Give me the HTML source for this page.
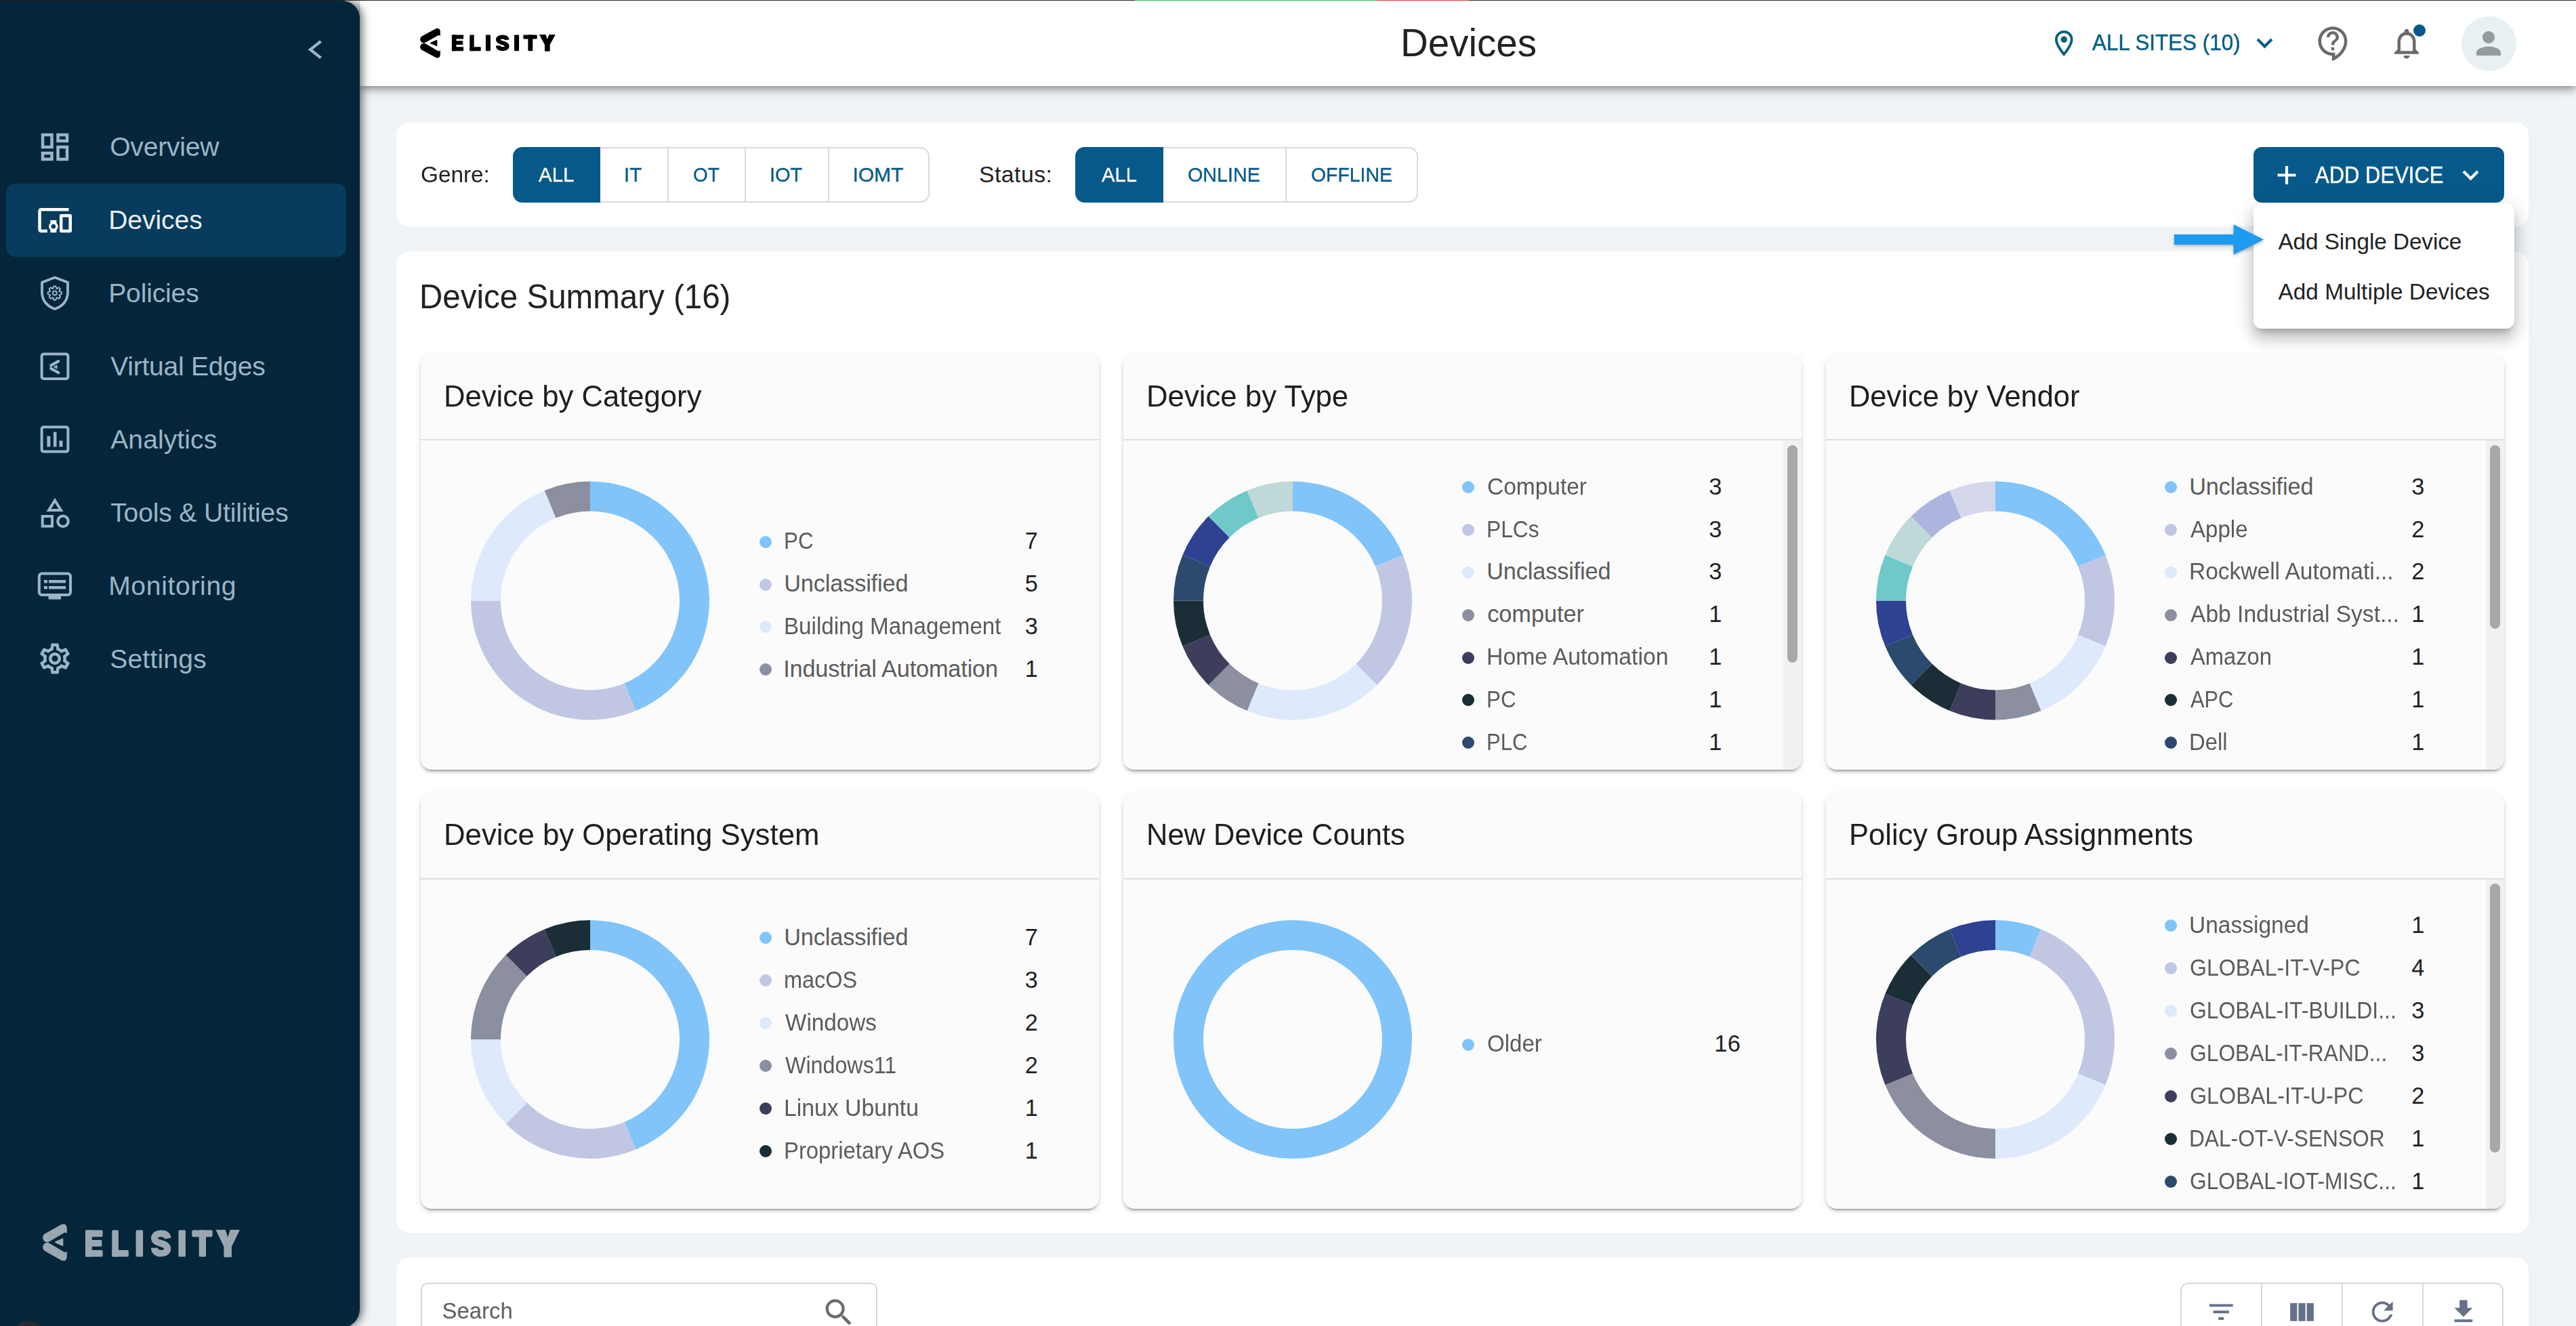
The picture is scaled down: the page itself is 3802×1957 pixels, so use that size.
<!DOCTYPE html><html><head><meta charset="utf-8"><style>
html,body{margin:0;padding:0;}
body{width:3802px;height:1957px;overflow:hidden;position:relative;background:#f0f4f7;font-family:"Liberation Sans", sans-serif;}
.t{position:absolute;white-space:nowrap;line-height:1;font-family:"Liberation Sans", sans-serif;}
svg{overflow:visible}
</style></head><body>
<div style="position:absolute;left:585px;top:181px;width:3147px;height:153px;background:#fff;border-radius:18px;"></div>
<div style="position:absolute;left:585px;top:371px;width:3147px;height:1449px;background:#fff;border-radius:20px;"></div>
<div style="position:absolute;left:585px;top:1856px;width:3147px;height:200px;background:#fff;border-radius:20px;"></div>
<div style="position:absolute;left:531px;top:1px;width:3271px;height:126px;background:#fff;box-shadow:0 4px 8px -2px rgba(0,0,0,.25),0 8px 10px 0 rgba(0,0,0,.15),0 2px 20px 0 rgba(0,0,0,.13);"></div>
<div style="position:absolute;left:0px;top:0px;width:3802px;height:1px;background:#2b2b2b;"></div>
<div style="position:absolute;left:1675px;top:0px;width:357px;height:1px;background:#2bc45a;"></div>
<div style="position:absolute;left:2032px;top:0px;width:136px;height:1px;background:#e0393e;"></div>
<div style="position:absolute;left:0px;top:1px;width:531px;height:1958.5px;background:#05263a;border-radius:0 26px 28px 0;box-shadow:4px 0 8px -2px rgba(0,0,0,.3),6px 0 12px 0 rgba(0,0,0,.22),2px 0 20px 0 rgba(0,0,0,.15);"></div>
<div style="position:absolute;left:18.6px;top:1949px;width:46.8px;height:46.8px;background:#27292d;border-radius:50%;"></div>
<svg style="position:absolute;left:0px;top:0px;" width="1" height="1"><polyline points="473.5,61 458,73.2 473.5,85.4" fill="none" stroke="#9bb5c7" stroke-width="4.2" stroke-linecap="butt" stroke-linejoin="miter"/></svg>
<div style="position:absolute;left:9px;top:271px;width:502px;height:107.5px;background:#083c5c;border-radius:14px;"></div>
<div class="t" style="left:162.20px;top:197.46px;font-size:39.03px;color:#9bb5c7;letter-spacing:-0.203px;font-weight:400;">Overview</div>
<div class="t" style="left:160.20px;top:305.46px;font-size:39.03px;color:#e8eff3;letter-spacing:-0.043px;font-weight:400;">Devices</div>
<div class="t" style="left:160.20px;top:413.46px;font-size:39.03px;color:#9bb5c7;letter-spacing:-0.133px;font-weight:400;">Policies</div>
<div class="t" style="left:163.20px;top:521.46px;font-size:39.03px;color:#9bb5c7;letter-spacing:-0.237px;font-weight:400;">Virtual Edges</div>
<div class="t" style="left:163.20px;top:629.46px;font-size:39.03px;color:#9bb5c7;letter-spacing:0.111px;font-weight:400;">Analytics</div>
<div class="t" style="left:163.20px;top:737.46px;font-size:39.03px;color:#9bb5c7;letter-spacing:-0.126px;font-weight:400;">Tools &amp; Utilities</div>
<div class="t" style="left:160.20px;top:845.46px;font-size:39.03px;color:#9bb5c7;letter-spacing:0.682px;font-weight:400;">Monitoring</div>
<div class="t" style="left:162.20px;top:953.46px;font-size:39.03px;color:#9bb5c7;letter-spacing:0.219px;font-weight:400;">Settings</div>
<svg style="position:absolute;left:54.25px;top:190.25px;" width="54.00" height="54.00" viewBox="0 0 24 24"><path d="M19 5v2h-4V5h4M9 5v6H5V5h4m10 8v6h-4v-6h4M9 17v2H5v-2h4M21 3h-8v6h8V3zM11 3H3v10h8V3zm10 8h-8v10h8V11zm-10 4H3v6h8v-6z" fill="#9bb5c7"/></svg>
<svg style="position:absolute;left:53.70px;top:298.00px;" width="54.24" height="54.24" viewBox="0 0 24 24"><path d="M3 6h18V4H3c-1.1 0-2 .9-2 2v12c0 1.1.9 2 2 2h4v-2H3V6zm10 6H9v1.78c-.61.55-1 1.33-1 2.22s.39 1.67 1 2.22V20h4v-1.78c.61-.55 1-1.34 1-2.22s-.39-1.67-1-2.22V12zm-2 5.5c-.83 0-1.5-.67-1.5-1.5s.67-1.5 1.5-1.5 1.5.67 1.5 1.5-.67 1.5-1.5 1.5zM22 8h-6c-.5 0-1 .5-1 1v10c0 .5.5 1 1 1h6c.5 0 1-.5 1-1V9c0-.5-.5-1-1-1zm-1 10h-4v-8h4v8z" fill="#ffffff"/></svg>
<svg style="position:absolute;left:0px;top:0px;" width="1" height="1"><path d="M81 409.5 L100 416.8 V431 C100 444 92 452.5 81 456 C70 452.5 62 444 62 431 V416.8 Z" fill="none" stroke="#9bb5c7" stroke-width="3.8" stroke-linejoin="round"/><path d="M78.18 425.90 L79.28 422.51 L82.32 422.51 L83.42 425.90 L83.69 426.00 L86.85 424.39 L89.01 426.55 L87.40 429.71 L87.50 429.98 L90.89 431.08 L90.89 434.12 L87.50 435.22 L87.40 435.49 L89.01 438.65 L86.85 440.81 L83.69 439.20 L83.42 439.30 L82.32 442.69 L79.28 442.69 L78.18 439.30 L77.91 439.20 L74.75 440.81 L72.59 438.65 L74.20 435.49 L74.10 435.22 L70.71 434.12 L70.71 431.08 L74.10 429.98 L74.20 429.71 L72.59 426.55 L74.75 424.39 L77.91 426.00Z" fill="none" stroke="#9bb5c7" stroke-width="2.0" stroke-linejoin="round"/><circle cx="80.8" cy="432.6" r="3.0" fill="none" stroke="#9bb5c7" stroke-width="2.0"/></svg>
<svg style="position:absolute;left:0px;top:0px;" width="1" height="1"><rect x="61.6" y="522.6" width="38.8" height="36.4" rx="3" fill="none" stroke="#9bb5c7" stroke-width="4"/><path d="M86.2 533.2 L75.2 539.4" stroke="#9bb5c7" stroke-width="4.3" stroke-linecap="round"/><path d="M75.2 543.8 L86.2 550" stroke="#9bb5c7" stroke-width="4.3" stroke-linecap="round"/><path d="M79.2 541.6 L84.2 539 L84.2 544.2 Z" fill="#9bb5c7" stroke="#9bb5c7" stroke-width="0.8" stroke-linejoin="round"/></svg>
<svg style="position:absolute;left:0px;top:0px;" width="1" height="1"><rect x="61.6" y="630.2" width="38.8" height="36.4" rx="3" fill="none" stroke="#9bb5c7" stroke-width="4"/><rect x="69.4" y="643.6" width="4.9" height="15.8" fill="#9bb5c7"/><rect x="78.9" y="637.5" width="4.6" height="21.9" fill="#9bb5c7"/><rect x="87.5" y="650.3" width="4.9" height="9.1" fill="#9bb5c7"/></svg>
<svg style="position:absolute;left:0px;top:0px;" width="1" height="1"><path d="M81 738.5 L90 753 L72 753 Z" fill="none" stroke="#9bb5c7" stroke-width="4" stroke-linejoin="miter"/><rect x="62.7" y="762" width="14.3" height="14.6" fill="none" stroke="#9bb5c7" stroke-width="4"/><circle cx="93" cy="769.3" r="7.8" fill="none" stroke="#9bb5c7" stroke-width="4"/></svg>
<svg style="position:absolute;left:0px;top:0px;" width="1" height="1"><rect x="57.8" y="846.5" width="46.2" height="31.5" rx="4" fill="none" stroke="#9bb5c7" stroke-width="4"/><rect x="71.6" y="879" width="18.4" height="5.6" fill="#9bb5c7"/><rect x="64.9" y="856" width="5" height="4.4" fill="#9bb5c7"/><rect x="72" y="856" width="25" height="4.4" fill="#9bb5c7"/><rect x="64.9" y="865" width="5" height="4.4" fill="#9bb5c7"/><rect x="72" y="865" width="25" height="4.4" fill="#9bb5c7"/></svg>
<svg style="position:absolute;left:53.65px;top:945.00px;" width="54.00" height="54.00" viewBox="0 0 24 24"><path d="M19.43 12.98c.04-.32.07-.64.07-.98 0-.34-.03-.66-.07-.98l2.11-1.65c.19-.15.24-.42.12-.64l-2-3.46c-.09-.16-.26-.25-.44-.25-.06 0-.12.01-.17.03l-2.49 1c-.52-.4-1.08-.73-1.69-.98l-.38-2.65C14.46 2.18 14.25 2 14 2h-4c-.25 0-.46.18-.49.42l-.38 2.650c-.61.25-1.17.59-1.69.98l-2.49-1c-.06-.02-.12-.03-.18-.03-.17 0-.34.09-.43.25l-2 3.46c-.13.22-.07.49.12.64l2.11 1.65c-.04.32-.07.65-.07.98 0 .33.03.66.07.98l-2.11 1.65c-.19.15-.24.42-.12.64l2 3.46c.09.16.26.25.44.25.06 0 .12-.01.17-.03l2.49-1c.52.4 1.08.73 1.69.98l.38 2.65c.03.24.24.42.49.42h4c.25 0 .46-.18.49-.42l.38-2.65c.61-.25 1.17-.59 1.69-.98l2.49 1c.06.02.12.03.18.03.17 0 .34-.09.43-.25l2-3.46c.12-.22.07-.49-.12-.64l-2.110-1.65zm-1.98-1.71c.04.31.05.52.05.73 0 .21-.02.43-.05.73l-.14 1.13.89.7 1.08.84-.7 1.21-1.27-.51-1.04-.42-.9.68c-.43.32-.84.56-1.25.73l-1.06.43-.16 1.13-.2 1.35h-1.4l-.19-1.35-.16-1.13-1.06-.43c-.43-.18-.83-.41-1.23-.71l-.91-.7-1.06.43-1.27.51-.7-1.21 1.08-.84.89-.7-.14-1.13c-.03-.31-.05-.54-.05-.74s.02-.43.05-.73l.14-1.13-.89-.7-1.08-.84.7-1.21 1.27.51 1.04.42.9-.68c.43-.32.84-.56 1.25-.73l1.06-.43.16-1.13.2-1.35h1.39l.19 1.35.16 1.13 1.06.43c.43.18.83.41 1.23.71l.91.7 1.06-.43 1.27-.51.7 1.21-1.07.85-.89.7.14 1.130zM12 8c-2.21 0-4 1.79-4 4s1.79 4 4 4 4-1.79 4-4-1.79-4-4-4zm0 6c-1.1 0-2-.9-2-2s.9-2 2-2 2 .9 2 2-.9 2-2 2z" fill="#9bb5c7"/></svg>
<svg style="position:absolute;left:0px;top:0px;" width="1" height="1"><g transform="translate(63,1806) scale(1.2,1.245)"><path d="M29.8 11.2 L27 10.4 L8.5 21 A5.3 5.3 0 0 1 2.5 12 L22.5 1.2 Q25.5 -0.4 28 1 Q29.8 2.4 29.8 5 Z" fill="#9aa7b1"/><path d="M29.8 33.1 L27 33.9 L8.5 23.3 A5.3 5.3 0 0 0 2.5 32.3 L22.5 43.1 Q25.5 44.7 28 43.3 Q29.8 41.9 29.8 39.3 Z" fill="#9aa7b1"/><path d="M15.8 21.9 L24.5 18.2 L24.5 25.8 Z" fill="#9aa7b1" stroke="#9aa7b1" stroke-width="1.6" stroke-linejoin="round"/></g></svg>
<svg style="position:absolute;left:0px;top:0px;" width="1" height="1"><g transform="translate(126,1815.5) scale(1.0,1.0)"><rect x="0" y="0" width="9.70" height="39.30" rx="1.6" fill="#9aa7b1"/><rect x="0" y="0" width="25.60" height="9.90" rx="1.6" fill="#9aa7b1"/><rect x="0" y="14.6" width="24.40" height="9.60" rx="1.6" fill="#9aa7b1"/><rect x="0" y="29.4" width="25.60" height="9.90" rx="1.6" fill="#9aa7b1"/><rect x="39.3" y="0" width="9.60" height="39.30" rx="1.6" fill="#9aa7b1"/><rect x="39.3" y="29.4" width="24.50" height="9.90" rx="1.6" fill="#9aa7b1"/><rect x="74.6" y="0" width="10.50" height="39.30" rx="1.6" fill="#9aa7b1"/><path d="M121.6 12.2 C120.8 6.5 116.5 4.95 111.6 4.95 C106 4.95 101.95 7.6 101.95 11.8 C101.95 16.6 106.5 18.2 111.8 19.6 C117.2 21 121.25 22.8 121.25 27.6 C121.25 32.2 117 34.35 111.6 34.35 C106.2 34.35 102 32 101.9 26.2" fill="none" stroke="#9aa7b1" stroke-width="9.9"/><rect x="137.4" y="0" width="10.50" height="39.30" rx="1.6" fill="#9aa7b1"/><rect x="157.3" y="0" width="30.30" height="9.90" rx="1.6" fill="#9aa7b1"/><rect x="167.7" y="0" width="10.30" height="39.30" rx="1.6" fill="#9aa7b1"/><path d="M193.3 0 L206.2 0 L210.25 12.6 L214.2 0 L227.1 0 L215.3 24.2 L215.3 39.3 L205 39.3 L205 24.2 Z" fill="#9aa7b1" stroke="#9aa7b1" stroke-width="1.2" stroke-linejoin="round"/></g></svg>
<svg style="position:absolute;left:0px;top:0px;" width="1" height="1"><g transform="translate(620,41.5) scale(1.0,1.0)"><path d="M29.8 11.2 L27 10.4 L8.5 21 A5.3 5.3 0 0 1 2.5 12 L22.5 1.2 Q25.5 -0.4 28 1 Q29.8 2.4 29.8 5 Z" fill="#000"/><path d="M29.8 33.1 L27 33.9 L8.5 23.3 A5.3 5.3 0 0 0 2.5 32.3 L22.5 43.1 Q25.5 44.7 28 43.3 Q29.8 41.9 29.8 39.3 Z" fill="#000"/><path d="M15.8 21.9 L24.5 18.2 L24.5 25.8 Z" fill="#000" stroke="#000" stroke-width="1.6" stroke-linejoin="round"/></g></svg>
<svg style="position:absolute;left:0px;top:0px;" width="1" height="1"><g transform="translate(666.9,51.4) scale(0.6704845814977973,0.6081424936386769)"><rect x="0" y="0" width="9.70" height="39.30" rx="1.6" fill="#000"/><rect x="0" y="0" width="25.60" height="9.90" rx="1.6" fill="#000"/><rect x="0" y="14.6" width="24.40" height="9.60" rx="1.6" fill="#000"/><rect x="0" y="29.4" width="25.60" height="9.90" rx="1.6" fill="#000"/><rect x="39.3" y="0" width="9.60" height="39.30" rx="1.6" fill="#000"/><rect x="39.3" y="29.4" width="24.50" height="9.90" rx="1.6" fill="#000"/><rect x="74.6" y="0" width="10.50" height="39.30" rx="1.6" fill="#000"/><path d="M121.6 12.2 C120.8 6.5 116.5 4.95 111.6 4.95 C106 4.95 101.95 7.6 101.95 11.8 C101.95 16.6 106.5 18.2 111.8 19.6 C117.2 21 121.25 22.8 121.25 27.6 C121.25 32.2 117 34.35 111.6 34.35 C106.2 34.35 102 32 101.9 26.2" fill="none" stroke="#000" stroke-width="9.9"/><rect x="137.4" y="0" width="10.50" height="39.30" rx="1.6" fill="#000"/><rect x="157.3" y="0" width="30.30" height="9.90" rx="1.6" fill="#000"/><rect x="167.7" y="0" width="10.30" height="39.30" rx="1.6" fill="#000"/><path d="M193.3 0 L206.2 0 L210.25 12.6 L214.2 0 L227.1 0 L215.3 24.2 L215.3 39.3 L205 39.3 L205 24.2 Z" fill="#000" stroke="#000" stroke-width="1.2" stroke-linejoin="round"/></g></svg>
<div class="t" style="left:2066.50px;top:34.67px;font-size:56.97px;color:#222;letter-spacing:0.000px;font-weight:400;transform:scaleX(0.9917);transform-origin:0 0;">Devices</div>
<svg style="position:absolute;left:0px;top:0px;" width="1" height="1"><g transform="translate(3023.5,41.2) scale(1.9)"><path d="M12 2C8.13 2 5 5.130 5 9c0 5.25 7 13 7 13s7-7.75 7-13c0-3.87-3.13-7-7-7zM7 9c0-2.76 2.24-5 5-5s5 2.24 5 5c0 2.88-2.88 7.19-5 9.88C9.920 16.21 7 11.85 7 9z" fill="#0a5e85"/><circle cx="12" cy="9" r="2.5" fill="#0a5e85"/></g></svg>
<div class="t" style="left:3088.00px;top:46.32px;font-size:33.76px;color:#0a5e85;letter-spacing:0.000px;font-weight:400;-webkit-text-stroke:0.5px #0a5e85;transform:scaleX(0.9302);transform-origin:0 0;">ALL SITES (10)</div>
<svg style="position:absolute;left:0px;top:0px;" width="1" height="1"><polyline points="3332,58 3342.5,68.5 3353,58" fill="none" stroke="#0a5e85" stroke-width="4.2"/></svg>
<svg style="position:absolute;left:3416.50px;top:36.70px;" width="54.24" height="54.24" viewBox="0 0 24 24"><path d="M11 23.59v-3.6c-5.01-.26-9-4.42-9-9.49C2 5.26 6.26 1 11.5 1S21 5.26 21 10.5c0 4.95-3.44 9.93-8.570 12.4l-1.43.69zM11.5 3C7.36 3 4 6.36 4 10.5S7.36 18 11.5 18H13v2.3c3.640-2.3 6-6.08 6-9.8C19 6.36 15.64 3 11.5 3zm-1 11.5h2v2h-2zm2-1.5h-2c0-3.25 3-3 3-5 0-1.1-.9-2-2-2s-2 .9-2 2h-2c0-2.21 1.79-4 4-4s4 1.79 4 4c0 2.5-3 2.75-3 5z" fill="#6b6b6b"/></svg>
<svg style="position:absolute;left:3525.00px;top:37.40px;" width="54.00" height="54.00" viewBox="0 0 24 24"><path d="M12 22c1.1 0 2-.9 2-2h-4c0 1.1.89 2 2 2zm6-6v-5c0-3.07-1.64-5.64-4.5-6.32V4c0-.83-.67-1.5-1.5-1.5s-1.5.67-1.5 1.5v.68C7.63 5.36 6 7.92 6 11v5l-2 2v1h16v-1l-2-2zm-2 1H8v-6c0-2.48 1.51-4.5 4-4.5s4 2.02 4 4.5v6z" fill="#6b6b6b"/></svg>
<div style="position:absolute;left:3562px;top:36px;width:18px;height:18px;background:#07598a;border-radius:50%;"></div>
<div style="position:absolute;left:3633px;top:24px;width:81px;height:81px;background:#e8f0f3;border-radius:50%;"></div>
<svg style="position:absolute;left:3646.00px;top:37.00px;" width="54.00" height="54.00" viewBox="0 0 24 24"><path d="M12 12c2.21 0 4-1.79 4-4s-1.79-4-4-4-4 1.79-4 4 1.79 4 4 4zm0 2c-2.67 0-8 1.34-8 4v2h16v-2c0-2.66-5.33-4-8-4z" fill="#949b9c"/></svg>
<div class="t" style="left:620.80px;top:240.62px;font-size:33.76px;color:#222;letter-spacing:0.000px;font-weight:400;transform:scaleX(0.9870);transform-origin:0 0;">Genre:</div>
<div class="t" style="left:1445.00px;top:240.62px;font-size:33.76px;color:#222;letter-spacing:0.487px;font-weight:400;">Status:</div>
<div style="position:absolute;left:757px;top:217px;width:615px;height:82px;box-sizing:border-box;border:2px solid #dadada;border-radius:14px;background:#fff;"></div>
<div style="position:absolute;left:757px;top:217px;width:129px;height:82px;background:#07598a;border-radius:14px 0 0 14px;"></div>
<div class="t" style="left:795.40px;top:242.95px;font-size:30.07px;color:#fff;letter-spacing:0.000px;font-weight:400;-webkit-text-stroke:0.35px #fff;transform:scaleX(0.9797);transform-origin:0 0;">ALL</div>
<div class="t" style="left:921.30px;top:242.95px;font-size:30.07px;color:#07598a;letter-spacing:0.000px;font-weight:400;-webkit-text-stroke:0.35px #07598a;transform:scaleX(0.9855);transform-origin:0 0;">IT</div>
<div style="position:absolute;left:985px;top:217px;width:2px;height:82px;background:#dadada;"></div>
<div class="t" style="left:1023.00px;top:242.95px;font-size:30.07px;color:#07598a;letter-spacing:0.000px;font-weight:400;-webkit-text-stroke:0.35px #07598a;transform:scaleX(0.9286);transform-origin:0 0;">OT</div>
<div style="position:absolute;left:1099px;top:217px;width:2px;height:82px;background:#dadada;"></div>
<div class="t" style="left:1135.70px;top:242.95px;font-size:30.07px;color:#07598a;letter-spacing:0.000px;font-weight:400;-webkit-text-stroke:0.35px #07598a;transform:scaleX(0.9636);transform-origin:0 0;">IOT</div>
<div style="position:absolute;left:1222px;top:217px;width:2px;height:82px;background:#dadada;"></div>
<div class="t" style="left:1258.50px;top:242.95px;font-size:30.07px;color:#07598a;letter-spacing:-0.093px;font-weight:400;-webkit-text-stroke:0.35px #07598a;">IOMT</div>
<div style="position:absolute;left:1587px;top:217px;width:505.5px;height:82px;box-sizing:border-box;border:2px solid #dadada;border-radius:14px;background:#fff;"></div>
<div style="position:absolute;left:1587px;top:217px;width:130px;height:82px;background:#07598a;border-radius:14px 0 0 14px;"></div>
<div class="t" style="left:1626.00px;top:242.95px;font-size:30.07px;color:#fff;letter-spacing:0.000px;font-weight:400;-webkit-text-stroke:0.35px #fff;transform:scaleX(0.9721);transform-origin:0 0;">ALL</div>
<div class="t" style="left:1753.00px;top:242.95px;font-size:30.07px;color:#07598a;letter-spacing:0.000px;font-weight:400;-webkit-text-stroke:0.35px #07598a;transform:scaleX(0.9556);transform-origin:0 0;">ONLINE</div>
<div style="position:absolute;left:1897px;top:217px;width:2px;height:82px;background:#dadada;"></div>
<div class="t" style="left:1934.70px;top:242.95px;font-size:30.07px;color:#07598a;letter-spacing:0.000px;font-weight:400;-webkit-text-stroke:0.35px #07598a;transform:scaleX(0.9448);transform-origin:0 0;">OFFLINE</div>
<div style="position:absolute;left:3326px;top:217px;width:370px;height:82px;background:#07598a;border-radius:12px;"></div>
<svg style="position:absolute;left:0px;top:0px;" width="1" height="1"><path d="M3375 245 V272 M3361.5 258.5 H3388.5" stroke="#fff" stroke-width="4.2"/><polyline points="3636,253 3646.5,263.5 3657,253" fill="none" stroke="#fff" stroke-width="4.2"/></svg>
<div class="t" style="left:3416.60px;top:240.83px;font-size:34.81px;color:#fff;letter-spacing:0.000px;font-weight:400;-webkit-text-stroke:0.45px #fff;transform:scaleX(0.8909);transform-origin:0 0;">ADD DEVICE</div>
<div class="t" style="left:618.80px;top:414.03px;font-size:49.58px;color:#222;letter-spacing:0.000px;font-weight:400;transform:scaleX(0.9584);transform-origin:0 0;">Device Summary (16)</div>
<div style="position:absolute;left:621px;top:523.5px;width:1001px;height:612.5px;background:#fbfbfb;border-radius:16px;box-shadow:0 6px 2px -4px rgba(0,0,0,.2),0 4px 4px 0 rgba(0,0,0,.12),0 2px 10px 0 rgba(0,0,0,.10);"></div>
<div style="position:absolute;left:621px;top:648.0px;width:1001px;height:2px;background:#dedede;"></div>
<div class="t" style="left:655.20px;top:562.99px;font-size:44.31px;color:#1e1e1e;letter-spacing:0.000px;font-weight:400;transform:scaleX(0.9842);transform-origin:0 0;">Device by Category</div>
<svg style="position:absolute;left:0px;top:0px;" width="1" height="1"><path d="M871.00 710.50A176 176 0 0 1 938.35 1049.10L921.51 1008.45A132 132 0 0 0 871.00 754.50Z" fill="#80c4fa"/><path d="M938.35 1049.10A176 176 0 0 1 695.00 886.50L739.00 886.50A132 132 0 0 0 921.51 1008.45Z" fill="#c1c7e3"/><path d="M695.00 886.50A176 176 0 0 1 803.65 723.90L820.49 764.55A132 132 0 0 0 739.00 886.50Z" fill="#deeafc"/><path d="M803.65 723.90A176 176 0 0 1 871.00 710.50L871.00 754.50A132 132 0 0 0 820.49 764.55Z" fill="#8c8fa0"/></svg>
<div style="position:absolute;left:1121px;top:790.65px;width:18px;height:18px;background:#80c4fa;border-radius:50%;"></div>
<div class="t" style="left:1157.20px;top:781.42px;font-size:34.29px;color:#5b5b5b;letter-spacing:0.000px;font-weight:400;transform:scaleX(0.9138);transform-origin:0 0;">PC</div>
<div class="t" style="left:532.50px;width:1000px;text-align:right;top:781.42px;font-size:34.29px;color:#222;letter-spacing:0.600px;font-weight:400;">7</div>
<div style="position:absolute;left:1121px;top:853.55px;width:18px;height:18px;background:#c1c7e3;border-radius:50%;"></div>
<div class="t" style="left:1157.20px;top:844.32px;font-size:34.29px;color:#5b5b5b;letter-spacing:-0.141px;font-weight:400;">Unclassified</div>
<div class="t" style="left:532.50px;width:1000px;text-align:right;top:844.32px;font-size:34.29px;color:#222;letter-spacing:0.600px;font-weight:400;">5</div>
<div style="position:absolute;left:1121px;top:916.4499999999999px;width:18px;height:18px;background:#deeafc;border-radius:50%;"></div>
<div class="t" style="left:1157.20px;top:907.22px;font-size:34.29px;color:#5b5b5b;letter-spacing:0.000px;font-weight:400;transform:scaleX(0.9665);transform-origin:0 0;">Building Management</div>
<div class="t" style="left:532.50px;width:1000px;text-align:right;top:907.22px;font-size:34.29px;color:#222;letter-spacing:0.600px;font-weight:400;">3</div>
<div style="position:absolute;left:1121px;top:979.3499999999999px;width:18px;height:18px;background:#8c8fa0;border-radius:50%;"></div>
<div class="t" style="left:1156.20px;top:970.12px;font-size:34.29px;color:#5b5b5b;letter-spacing:-0.164px;font-weight:400;">Industrial Automation</div>
<div class="t" style="left:532.50px;width:1000px;text-align:right;top:970.12px;font-size:34.29px;color:#222;letter-spacing:0.600px;font-weight:400;">1</div>
<div style="position:absolute;left:1658px;top:523.5px;width:1001px;height:612.5px;background:#fbfbfb;border-radius:16px;box-shadow:0 6px 2px -4px rgba(0,0,0,.2),0 4px 4px 0 rgba(0,0,0,.12),0 2px 10px 0 rgba(0,0,0,.10);"></div>
<div style="position:absolute;left:1658px;top:648.0px;width:1001px;height:2px;background:#dedede;"></div>
<div class="t" style="left:1692.20px;top:562.99px;font-size:44.31px;color:#1e1e1e;letter-spacing:0.000px;font-weight:400;transform:scaleX(0.9873);transform-origin:0 0;">Device by Type</div>
<svg style="position:absolute;left:0px;top:0px;" width="1" height="1"><path d="M1908.00 710.50A176 176 0 0 1 2070.60 819.15L2029.95 835.99A132 132 0 0 0 1908.00 754.50Z" fill="#80c4fa"/><path d="M2070.60 819.15A176 176 0 0 1 2032.45 1010.95L2001.34 979.84A132 132 0 0 0 2029.95 835.99Z" fill="#c1c7e3"/><path d="M2032.45 1010.95A176 176 0 0 1 1840.65 1049.10L1857.49 1008.45A132 132 0 0 0 2001.34 979.84Z" fill="#deeafc"/><path d="M1840.65 1049.10A176 176 0 0 1 1783.55 1010.95L1814.66 979.84A132 132 0 0 0 1857.49 1008.45Z" fill="#8c8fa0"/><path d="M1783.55 1010.95A176 176 0 0 1 1745.40 953.85L1786.05 937.01A132 132 0 0 0 1814.66 979.84Z" fill="#3d3d5c"/><path d="M1745.40 953.85A176 176 0 0 1 1732.00 886.50L1776.00 886.50A132 132 0 0 0 1786.05 937.01Z" fill="#1b2d36"/><path d="M1732.00 886.50A176 176 0 0 1 1745.40 819.15L1786.05 835.99A132 132 0 0 0 1776.00 886.50Z" fill="#2b4a6e"/><path d="M1745.40 819.15A176 176 0 0 1 1783.55 762.05L1814.66 793.16A132 132 0 0 0 1786.05 835.99Z" fill="#2f4191"/><path d="M1783.55 762.05A176 176 0 0 1 1840.65 723.90L1857.49 764.55A132 132 0 0 0 1814.66 793.16Z" fill="#6ec9c8"/><path d="M1840.65 723.90A176 176 0 0 1 1908.00 710.50L1908.00 754.50A132 132 0 0 0 1857.49 764.55Z" fill="#bfd8d8"/></svg>
<div style="position:absolute;left:2158px;top:709.9px;width:18px;height:18px;background:#80c4fa;border-radius:50%;"></div>
<div class="t" style="left:2195.20px;top:700.67px;font-size:34.29px;color:#5b5b5b;letter-spacing:0.000px;font-weight:400;transform:scaleX(0.9765);transform-origin:0 0;">Computer</div>
<div class="t" style="left:1542.00px;width:1000px;text-align:right;top:700.67px;font-size:34.29px;color:#222;letter-spacing:0.600px;font-weight:400;">3</div>
<div style="position:absolute;left:2158px;top:772.8px;width:18px;height:18px;background:#c1c7e3;border-radius:50%;"></div>
<div class="t" style="left:2194.20px;top:763.57px;font-size:34.29px;color:#5b5b5b;letter-spacing:0.000px;font-weight:400;transform:scaleX(0.9270);transform-origin:0 0;">PLCs</div>
<div class="t" style="left:1542.00px;width:1000px;text-align:right;top:763.57px;font-size:34.29px;color:#222;letter-spacing:0.600px;font-weight:400;">3</div>
<div style="position:absolute;left:2158px;top:835.6999999999999px;width:18px;height:18px;background:#deeafc;border-radius:50%;"></div>
<div class="t" style="left:2194.20px;top:826.47px;font-size:34.29px;color:#5b5b5b;letter-spacing:-0.141px;font-weight:400;">Unclassified</div>
<div class="t" style="left:1542.00px;width:1000px;text-align:right;top:826.47px;font-size:34.29px;color:#222;letter-spacing:0.600px;font-weight:400;">3</div>
<div style="position:absolute;left:2158px;top:898.5999999999999px;width:18px;height:18px;background:#8c8fa0;border-radius:50%;"></div>
<div class="t" style="left:2195.20px;top:889.37px;font-size:34.29px;color:#5b5b5b;letter-spacing:-0.012px;font-weight:400;">computer</div>
<div class="t" style="left:1542.00px;width:1000px;text-align:right;top:889.37px;font-size:34.29px;color:#222;letter-spacing:0.600px;font-weight:400;">1</div>
<div style="position:absolute;left:2158px;top:961.5px;width:18px;height:18px;background:#3d3d5c;border-radius:50%;"></div>
<div class="t" style="left:2194.20px;top:952.27px;font-size:34.29px;color:#5b5b5b;letter-spacing:0.000px;font-weight:400;transform:scaleX(0.9855);transform-origin:0 0;">Home Automation</div>
<div class="t" style="left:1542.00px;width:1000px;text-align:right;top:952.27px;font-size:34.29px;color:#222;letter-spacing:0.600px;font-weight:400;">1</div>
<div style="position:absolute;left:2158px;top:1024.4px;width:18px;height:18px;background:#1b2d36;border-radius:50%;"></div>
<div class="t" style="left:2194.20px;top:1015.17px;font-size:34.29px;color:#5b5b5b;letter-spacing:0.000px;font-weight:400;transform:scaleX(0.9138);transform-origin:0 0;">PC</div>
<div class="t" style="left:1542.00px;width:1000px;text-align:right;top:1015.17px;font-size:34.29px;color:#222;letter-spacing:0.600px;font-weight:400;">1</div>
<div style="position:absolute;left:2158px;top:1087.3px;width:18px;height:18px;background:#2b4a6e;border-radius:50%;"></div>
<div class="t" style="left:2194.20px;top:1078.07px;font-size:34.29px;color:#5b5b5b;letter-spacing:0.000px;font-weight:400;transform:scaleX(0.9057);transform-origin:0 0;">PLC</div>
<div class="t" style="left:1542.00px;width:1000px;text-align:right;top:1078.07px;font-size:34.29px;color:#222;letter-spacing:0.600px;font-weight:400;">1</div>
<div style="position:absolute;left:2632px;top:650.0px;width:27px;height:486.0px;background:#f1f1f1;border-radius:0 0 16px 0;"></div>
<div style="position:absolute;left:2638px;top:657.0px;width:14.6px;height:321.0px;background:#a8a8a8;border-radius:8px;"></div>
<div style="position:absolute;left:2695px;top:523.5px;width:1001px;height:612.5px;background:#fbfbfb;border-radius:16px;box-shadow:0 6px 2px -4px rgba(0,0,0,.2),0 4px 4px 0 rgba(0,0,0,.12),0 2px 10px 0 rgba(0,0,0,.10);"></div>
<div style="position:absolute;left:2695px;top:648.0px;width:1001px;height:2px;background:#dedede;"></div>
<div class="t" style="left:2729.20px;top:562.99px;font-size:44.31px;color:#1e1e1e;letter-spacing:0.000px;font-weight:400;transform:scaleX(0.9807);transform-origin:0 0;">Device by Vendor</div>
<svg style="position:absolute;left:0px;top:0px;" width="1" height="1"><path d="M2945.00 710.50A176 176 0 0 1 3107.60 819.15L3066.95 835.99A132 132 0 0 0 2945.00 754.50Z" fill="#80c4fa"/><path d="M3107.60 819.15A176 176 0 0 1 3107.60 953.85L3066.95 937.01A132 132 0 0 0 3066.95 835.99Z" fill="#c1c7e3"/><path d="M3107.60 953.85A176 176 0 0 1 3012.35 1049.10L2995.51 1008.45A132 132 0 0 0 3066.95 937.01Z" fill="#deeafc"/><path d="M3012.35 1049.10A176 176 0 0 1 2945.00 1062.50L2945.00 1018.50A132 132 0 0 0 2995.51 1008.45Z" fill="#8c8fa0"/><path d="M2945.00 1062.50A176 176 0 0 1 2877.65 1049.10L2894.49 1008.45A132 132 0 0 0 2945.00 1018.50Z" fill="#3d3d5c"/><path d="M2877.65 1049.10A176 176 0 0 1 2820.55 1010.95L2851.66 979.84A132 132 0 0 0 2894.49 1008.45Z" fill="#1b2d36"/><path d="M2820.55 1010.95A176 176 0 0 1 2782.40 953.85L2823.05 937.01A132 132 0 0 0 2851.66 979.84Z" fill="#2b4a6e"/><path d="M2782.40 953.85A176 176 0 0 1 2769.00 886.50L2813.00 886.50A132 132 0 0 0 2823.05 937.01Z" fill="#2f4191"/><path d="M2769.00 886.50A176 176 0 0 1 2782.40 819.15L2823.05 835.99A132 132 0 0 0 2813.00 886.50Z" fill="#6ec9c8"/><path d="M2782.40 819.15A176 176 0 0 1 2820.55 762.05L2851.66 793.16A132 132 0 0 0 2823.05 835.99Z" fill="#bfd8d8"/><path d="M2820.55 762.05A176 176 0 0 1 2877.65 723.90L2894.49 764.55A132 132 0 0 0 2851.66 793.16Z" fill="#adb5de"/><path d="M2877.65 723.90A176 176 0 0 1 2945.00 710.50L2945.00 754.50A132 132 0 0 0 2894.49 764.55Z" fill="#d5d8ec"/></svg>
<div style="position:absolute;left:3195px;top:709.9px;width:18px;height:18px;background:#80c4fa;border-radius:50%;"></div>
<div class="t" style="left:3231.20px;top:700.67px;font-size:34.29px;color:#5b5b5b;letter-spacing:-0.141px;font-weight:400;">Unclassified</div>
<div class="t" style="left:2579.00px;width:1000px;text-align:right;top:700.67px;font-size:34.29px;color:#222;letter-spacing:0.600px;font-weight:400;">3</div>
<div style="position:absolute;left:3195px;top:772.8px;width:18px;height:18px;background:#c1c7e3;border-radius:50%;"></div>
<div class="t" style="left:3233.20px;top:763.57px;font-size:34.29px;color:#5b5b5b;letter-spacing:0.000px;font-weight:400;transform:scaleX(0.9641);transform-origin:0 0;">Apple</div>
<div class="t" style="left:2579.00px;width:1000px;text-align:right;top:763.57px;font-size:34.29px;color:#222;letter-spacing:0.600px;font-weight:400;">2</div>
<div style="position:absolute;left:3195px;top:835.6999999999999px;width:18px;height:18px;background:#deeafc;border-radius:50%;"></div>
<div class="t" style="left:3231.20px;top:826.47px;font-size:34.29px;color:#5b5b5b;letter-spacing:0.000px;font-weight:400;transform:scaleX(0.9771);transform-origin:0 0;">Rockwell Automati...</div>
<div class="t" style="left:2579.00px;width:1000px;text-align:right;top:826.47px;font-size:34.29px;color:#222;letter-spacing:0.600px;font-weight:400;">2</div>
<div style="position:absolute;left:3195px;top:898.5999999999999px;width:18px;height:18px;background:#8c8fa0;border-radius:50%;"></div>
<div class="t" style="left:3233.20px;top:889.37px;font-size:34.29px;color:#5b5b5b;letter-spacing:0.000px;font-weight:400;transform:scaleX(0.9796);transform-origin:0 0;">Abb Industrial Syst...</div>
<div class="t" style="left:2579.00px;width:1000px;text-align:right;top:889.37px;font-size:34.29px;color:#222;letter-spacing:0.600px;font-weight:400;">1</div>
<div style="position:absolute;left:3195px;top:961.5px;width:18px;height:18px;background:#3d3d5c;border-radius:50%;"></div>
<div class="t" style="left:3233.20px;top:952.27px;font-size:34.29px;color:#5b5b5b;letter-spacing:0.000px;font-weight:400;transform:scaleX(0.9540);transform-origin:0 0;">Amazon</div>
<div class="t" style="left:2579.00px;width:1000px;text-align:right;top:952.27px;font-size:34.29px;color:#222;letter-spacing:0.600px;font-weight:400;">1</div>
<div style="position:absolute;left:3195px;top:1024.4px;width:18px;height:18px;background:#1b2d36;border-radius:50%;"></div>
<div class="t" style="left:3233.20px;top:1015.17px;font-size:34.29px;color:#5b5b5b;letter-spacing:0.000px;font-weight:400;transform:scaleX(0.8992);transform-origin:0 0;">APC</div>
<div class="t" style="left:2579.00px;width:1000px;text-align:right;top:1015.17px;font-size:34.29px;color:#222;letter-spacing:0.600px;font-weight:400;">1</div>
<div style="position:absolute;left:3195px;top:1087.3px;width:18px;height:18px;background:#2b4a6e;border-radius:50%;"></div>
<div class="t" style="left:3231.20px;top:1078.07px;font-size:34.29px;color:#5b5b5b;letter-spacing:0.000px;font-weight:400;transform:scaleX(0.9560);transform-origin:0 0;">Dell</div>
<div class="t" style="left:2579.00px;width:1000px;text-align:right;top:1078.07px;font-size:34.29px;color:#222;letter-spacing:0.600px;font-weight:400;">1</div>
<div style="position:absolute;left:3669px;top:650.0px;width:27px;height:486.0px;background:#f1f1f1;border-radius:0 0 16px 0;"></div>
<div style="position:absolute;left:3675px;top:657.0px;width:14.6px;height:270.5px;background:#a8a8a8;border-radius:8px;"></div>
<div style="position:absolute;left:621px;top:1171px;width:1001px;height:612.5px;background:#fbfbfb;border-radius:16px;box-shadow:0 6px 2px -4px rgba(0,0,0,.2),0 4px 4px 0 rgba(0,0,0,.12),0 2px 10px 0 rgba(0,0,0,.10);"></div>
<div style="position:absolute;left:621px;top:1295.5px;width:1001px;height:2px;background:#dedede;"></div>
<div class="t" style="left:655.20px;top:1210.49px;font-size:44.31px;color:#1e1e1e;letter-spacing:0.000px;font-weight:400;transform:scaleX(0.9877);transform-origin:0 0;">Device by Operating System</div>
<svg style="position:absolute;left:0px;top:0px;" width="1" height="1"><path d="M871.00 1358.00A176 176 0 0 1 938.35 1696.60L921.51 1655.95A132 132 0 0 0 871.00 1402.00Z" fill="#80c4fa"/><path d="M938.35 1696.60A176 176 0 0 1 746.55 1658.45L777.66 1627.34A132 132 0 0 0 921.51 1655.95Z" fill="#c1c7e3"/><path d="M746.55 1658.45A176 176 0 0 1 695.00 1534.00L739.00 1534.00A132 132 0 0 0 777.66 1627.34Z" fill="#deeafc"/><path d="M695.00 1534.00A176 176 0 0 1 746.55 1409.55L777.66 1440.66A132 132 0 0 0 739.00 1534.00Z" fill="#8c8fa0"/><path d="M746.55 1409.55A176 176 0 0 1 803.65 1371.40L820.49 1412.05A132 132 0 0 0 777.66 1440.66Z" fill="#3d3d5c"/><path d="M803.65 1371.40A176 176 0 0 1 871.00 1358.00L871.00 1402.00A132 132 0 0 0 820.49 1412.05Z" fill="#1b2d36"/></svg>
<div style="position:absolute;left:1121px;top:1375.25px;width:18px;height:18px;background:#80c4fa;border-radius:50%;"></div>
<div class="t" style="left:1157.20px;top:1366.02px;font-size:34.29px;color:#5b5b5b;letter-spacing:-0.141px;font-weight:400;">Unclassified</div>
<div class="t" style="left:532.50px;width:1000px;text-align:right;top:1366.02px;font-size:34.29px;color:#222;letter-spacing:0.600px;font-weight:400;">7</div>
<div style="position:absolute;left:1121px;top:1438.15px;width:18px;height:18px;background:#c1c7e3;border-radius:50%;"></div>
<div class="t" style="left:1157.20px;top:1428.92px;font-size:34.29px;color:#5b5b5b;letter-spacing:0.000px;font-weight:400;transform:scaleX(0.9459);transform-origin:0 0;">macOS</div>
<div class="t" style="left:532.50px;width:1000px;text-align:right;top:1428.92px;font-size:34.29px;color:#222;letter-spacing:0.600px;font-weight:400;">3</div>
<div style="position:absolute;left:1121px;top:1501.05px;width:18px;height:18px;background:#deeafc;border-radius:50%;"></div>
<div class="t" style="left:1159.20px;top:1491.82px;font-size:34.29px;color:#5b5b5b;letter-spacing:0.000px;font-weight:400;transform:scaleX(0.9701);transform-origin:0 0;">Windows</div>
<div class="t" style="left:532.50px;width:1000px;text-align:right;top:1491.82px;font-size:34.29px;color:#222;letter-spacing:0.600px;font-weight:400;">2</div>
<div style="position:absolute;left:1121px;top:1563.95px;width:18px;height:18px;background:#8c8fa0;border-radius:50%;"></div>
<div class="t" style="left:1159.20px;top:1554.72px;font-size:34.29px;color:#5b5b5b;letter-spacing:0.000px;font-weight:400;transform:scaleX(0.9402);transform-origin:0 0;">Windows11</div>
<div class="t" style="left:532.50px;width:1000px;text-align:right;top:1554.72px;font-size:34.29px;color:#222;letter-spacing:0.600px;font-weight:400;">2</div>
<div style="position:absolute;left:1121px;top:1626.85px;width:18px;height:18px;background:#3d3d5c;border-radius:50%;"></div>
<div class="t" style="left:1157.20px;top:1617.62px;font-size:34.29px;color:#5b5b5b;letter-spacing:0.000px;font-weight:400;transform:scaleX(0.9851);transform-origin:0 0;">Linux Ubuntu</div>
<div class="t" style="left:532.50px;width:1000px;text-align:right;top:1617.62px;font-size:34.29px;color:#222;letter-spacing:0.600px;font-weight:400;">1</div>
<div style="position:absolute;left:1121px;top:1689.75px;width:18px;height:18px;background:#1b2d36;border-radius:50%;"></div>
<div class="t" style="left:1157.20px;top:1680.52px;font-size:34.29px;color:#5b5b5b;letter-spacing:0.000px;font-weight:400;transform:scaleX(0.9578);transform-origin:0 0;">Proprietary AOS</div>
<div class="t" style="left:532.50px;width:1000px;text-align:right;top:1680.52px;font-size:34.29px;color:#222;letter-spacing:0.600px;font-weight:400;">1</div>
<div style="position:absolute;left:1658px;top:1171px;width:1001px;height:612.5px;background:#fbfbfb;border-radius:16px;box-shadow:0 6px 2px -4px rgba(0,0,0,.2),0 4px 4px 0 rgba(0,0,0,.12),0 2px 10px 0 rgba(0,0,0,.10);"></div>
<div style="position:absolute;left:1658px;top:1295.5px;width:1001px;height:2px;background:#dedede;"></div>
<div class="t" style="left:1692.20px;top:1210.49px;font-size:44.31px;color:#1e1e1e;letter-spacing:0.000px;font-weight:400;transform:scaleX(0.9817);transform-origin:0 0;">New Device Counts</div>
<svg style="position:absolute;left:0px;top:0px;" width="1" height="1"><circle cx="1908" cy="1534" r="154.0" fill="none" stroke="#80c4fa" stroke-width="44"/></svg>
<div style="position:absolute;left:2158px;top:1532.5px;width:18px;height:18px;background:#80c4fa;border-radius:50%;"></div>
<div class="t" style="left:2195.20px;top:1523.27px;font-size:34.29px;color:#5b5b5b;letter-spacing:0.000px;font-weight:400;transform:scaleX(0.9634);transform-origin:0 0;">Older</div>
<div class="t" style="left:1569.50px;width:1000px;text-align:right;top:1523.27px;font-size:34.29px;color:#222;letter-spacing:0.600px;font-weight:400;">16</div>
<div style="position:absolute;left:2695px;top:1171px;width:1001px;height:612.5px;background:#fbfbfb;border-radius:16px;box-shadow:0 6px 2px -4px rgba(0,0,0,.2),0 4px 4px 0 rgba(0,0,0,.12),0 2px 10px 0 rgba(0,0,0,.10);"></div>
<div style="position:absolute;left:2695px;top:1295.5px;width:1001px;height:2px;background:#dedede;"></div>
<div class="t" style="left:2729.20px;top:1210.49px;font-size:44.31px;color:#1e1e1e;letter-spacing:0.000px;font-weight:400;transform:scaleX(0.9825);transform-origin:0 0;">Policy Group Assignments</div>
<svg style="position:absolute;left:0px;top:0px;" width="1" height="1"><path d="M2945.00 1358.00A176 176 0 0 1 3012.35 1371.40L2995.51 1412.05A132 132 0 0 0 2945.00 1402.00Z" fill="#80c4fa"/><path d="M3012.35 1371.40A176 176 0 0 1 3107.60 1601.35L3066.95 1584.51A132 132 0 0 0 2995.51 1412.05Z" fill="#c1c7e3"/><path d="M3107.60 1601.35A176 176 0 0 1 2945.00 1710.00L2945.00 1666.00A132 132 0 0 0 3066.95 1584.51Z" fill="#deeafc"/><path d="M2945.00 1710.00A176 176 0 0 1 2782.40 1601.35L2823.05 1584.51A132 132 0 0 0 2945.00 1666.00Z" fill="#8c8fa0"/><path d="M2782.40 1601.35A176 176 0 0 1 2782.40 1466.65L2823.05 1483.49A132 132 0 0 0 2823.05 1584.51Z" fill="#3d3d5c"/><path d="M2782.40 1466.65A176 176 0 0 1 2820.55 1409.55L2851.66 1440.66A132 132 0 0 0 2823.05 1483.49Z" fill="#1b2d36"/><path d="M2820.55 1409.55A176 176 0 0 1 2877.65 1371.40L2894.49 1412.05A132 132 0 0 0 2851.66 1440.66Z" fill="#2b4a6e"/><path d="M2877.65 1371.40A176 176 0 0 1 2945.00 1358.00L2945.00 1402.00A132 132 0 0 0 2894.49 1412.05Z" fill="#2f4191"/></svg>
<div style="position:absolute;left:3195px;top:1357.4px;width:18px;height:18px;background:#80c4fa;border-radius:50%;"></div>
<div class="t" style="left:3231.20px;top:1348.17px;font-size:34.29px;color:#5b5b5b;letter-spacing:0.000px;font-weight:400;transform:scaleX(0.9775);transform-origin:0 0;">Unassigned</div>
<div class="t" style="left:2579.00px;width:1000px;text-align:right;top:1348.17px;font-size:34.29px;color:#222;letter-spacing:0.600px;font-weight:400;">1</div>
<div style="position:absolute;left:3195px;top:1420.3000000000002px;width:18px;height:18px;background:#c1c7e3;border-radius:50%;"></div>
<div class="t" style="left:3232.20px;top:1411.07px;font-size:34.29px;color:#5b5b5b;letter-spacing:0.000px;font-weight:400;transform:scaleX(0.9369);transform-origin:0 0;">GLOBAL-IT-V-PC</div>
<div class="t" style="left:2579.00px;width:1000px;text-align:right;top:1411.07px;font-size:34.29px;color:#222;letter-spacing:0.600px;font-weight:400;">4</div>
<div style="position:absolute;left:3195px;top:1483.2px;width:18px;height:18px;background:#deeafc;border-radius:50%;"></div>
<div class="t" style="left:3232.20px;top:1473.97px;font-size:34.29px;color:#5b5b5b;letter-spacing:0.000px;font-weight:400;transform:scaleX(0.9302);transform-origin:0 0;">GLOBAL-IT-BUILDI...</div>
<div class="t" style="left:2579.00px;width:1000px;text-align:right;top:1473.97px;font-size:34.29px;color:#222;letter-spacing:0.600px;font-weight:400;">3</div>
<div style="position:absolute;left:3195px;top:1546.1000000000001px;width:18px;height:18px;background:#8c8fa0;border-radius:50%;"></div>
<div class="t" style="left:3232.20px;top:1536.87px;font-size:34.29px;color:#5b5b5b;letter-spacing:0.000px;font-weight:400;transform:scaleX(0.9267);transform-origin:0 0;">GLOBAL-IT-RAND...</div>
<div class="t" style="left:2579.00px;width:1000px;text-align:right;top:1536.87px;font-size:34.29px;color:#222;letter-spacing:0.600px;font-weight:400;">3</div>
<div style="position:absolute;left:3195px;top:1609.0px;width:18px;height:18px;background:#3d3d5c;border-radius:50%;"></div>
<div class="t" style="left:3232.20px;top:1599.77px;font-size:34.29px;color:#5b5b5b;letter-spacing:0.000px;font-weight:400;transform:scaleX(0.9422);transform-origin:0 0;">GLOBAL-IT-U-PC</div>
<div class="t" style="left:2579.00px;width:1000px;text-align:right;top:1599.77px;font-size:34.29px;color:#222;letter-spacing:0.600px;font-weight:400;">2</div>
<div style="position:absolute;left:3195px;top:1671.9px;width:18px;height:18px;background:#1b2d36;border-radius:50%;"></div>
<div class="t" style="left:3231.20px;top:1662.67px;font-size:34.29px;color:#5b5b5b;letter-spacing:0.000px;font-weight:400;transform:scaleX(0.9237);transform-origin:0 0;">DAL-OT-V-SENSOR</div>
<div class="t" style="left:2579.00px;width:1000px;text-align:right;top:1662.67px;font-size:34.29px;color:#222;letter-spacing:0.600px;font-weight:400;">1</div>
<div style="position:absolute;left:3195px;top:1734.8000000000002px;width:18px;height:18px;background:#2b4a6e;border-radius:50%;"></div>
<div class="t" style="left:3232.20px;top:1725.57px;font-size:34.29px;color:#5b5b5b;letter-spacing:0.000px;font-weight:400;transform:scaleX(0.9248);transform-origin:0 0;">GLOBAL-IOT-MISC...</div>
<div class="t" style="left:2579.00px;width:1000px;text-align:right;top:1725.57px;font-size:34.29px;color:#222;letter-spacing:0.600px;font-weight:400;">1</div>
<div style="position:absolute;left:3669px;top:1297.5px;width:27px;height:486.0px;background:#f1f1f1;border-radius:0 0 16px 0;"></div>
<div style="position:absolute;left:3675px;top:1304.4px;width:14.6px;height:397.1px;background:#a8a8a8;border-radius:8px;"></div>
<div style="position:absolute;left:3326px;top:300px;width:385px;height:185px;background:#fff;border-radius:12px;box-shadow:0 10px 10px -6px rgba(0,0,0,.2),0 16px 20px 2px rgba(0,0,0,.14),0 6px 28px 4px rgba(0,0,0,.12);"></div>
<div class="t" style="left:3362.50px;top:339.77px;font-size:33.23px;color:#222;letter-spacing:-0.042px;font-weight:400;">Add Single Device</div>
<div class="t" style="left:3362.50px;top:413.67px;font-size:33.23px;color:#222;letter-spacing:0.102px;font-weight:400;">Add Multiple Devices</div>
<svg style="position:absolute;left:0px;top:0px;filter:drop-shadow(0 2px 2px rgba(0,0,0,.28));" width="1" height="1"><path d="M3209 346 H3296.6 V331.3 L3341.2 353.4 L3296.6 375.8 V361 H3209 Z" fill="#1c9bf1"/></svg>
<div style="position:absolute;left:621px;top:1892.5px;width:674px;height:120px;box-sizing:border-box;border:2px solid #d6d6d6;border-radius:10px;background:#fff;"></div>
<div class="t" style="left:652.50px;top:1919.32px;font-size:32.7px;color:#5f5f5f;letter-spacing:0.122px;font-weight:400;">Search</div>
<svg style="position:absolute;left:1211.50px;top:1910.50px;" width="52.08" height="52.08" viewBox="0 0 24 24"><path d="M15.5 14h-.79l-.28-.27C15.41 12.59 16 11.11 16 9.5 16 5.91 13.09 3 9.5 3S3 5.91 3 9.5 5.91 16 9.5 16c1.61 0 3.09-.59 4.23-1.57l.27.28v.79l5 4.99L20.49 19l-4.99-5zm-6 0C7.01 14 5 11.99 5 9.5S7.01 5 9.5 5 14 7.01 14 9.5 11.99 14 9.5 14z" fill="#6b6b6b"/></svg>
<div style="position:absolute;left:3218px;top:1892.6px;width:477.4px;height:120px;box-sizing:border-box;border:2px solid #d9d9d9;border-radius:12px;background:#fff;"></div>
<div style="position:absolute;left:3337px;top:1892.6px;width:2px;height:120px;background:#d9d9d9;"></div>
<div style="position:absolute;left:3456px;top:1892.6px;width:2px;height:120px;background:#d9d9d9;"></div>
<div style="position:absolute;left:3575px;top:1892.6px;width:2px;height:120px;background:#d9d9d9;"></div>
<svg style="position:absolute;left:3255.20px;top:1912.90px;" width="46.56" height="46.56" viewBox="0 0 24 24"><path d="M10 18h4v-2h-4v2zM3 6v2h18V6H3zm3 7h12v-2H6v2z" fill="#65708a"/></svg>
<svg style="position:absolute;left:3371.80px;top:1912.80px;" width="48.96" height="48.96" viewBox="0 0 24 24"><path d="M10 18h5V5h-5v13zm-6 0h5V5H4v13zM16 5v13h5V5h-5z" fill="#65708a"/></svg>
<svg style="position:absolute;left:3493.30px;top:1913.30px;" width="46.32" height="46.32" viewBox="0 0 24 24"><path d="M17.65 6.35C16.2 4.9 14.21 4 12 4c-4.42 0-7.99 3.58-7.99 8s3.57 8 7.99 8c3.73 0 6.84-2.55 7.73-6h-2.08c-.82 2.33-3.04 4-5.65 4-3.31 0-6-2.69-6-6s2.69-6 6-6c1.66 0 3.14.69 4.22 1.78L13 11h7V4l-2.35 2.35z" fill="#65708a"/></svg>
<svg style="position:absolute;left:3612.50px;top:1913.30px;" width="45.84" height="45.84" viewBox="0 0 24 24"><path d="M19 9h-4V3H9v6H5l7 7 7-7zM5 18v2h14v-2H5z" fill="#65708a"/></svg>
</body></html>
